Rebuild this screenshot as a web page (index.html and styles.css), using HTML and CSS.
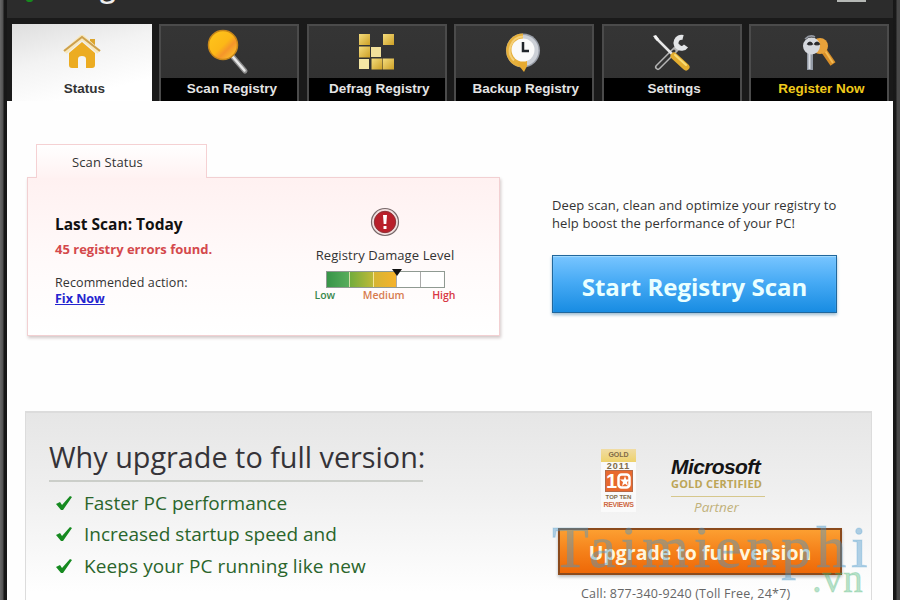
FILE: index.html
```html
<!DOCTYPE html>
<html lang="en">
<head>
  <meta charset="UTF-8">
  <title>RegClean Pro</title>
  <link rel="stylesheet" href="styles.css">
</head>
<body>
<div class="window">
  <div class="titlebar">
    <span class="app-dot"></span>
    <span class="app-name">RegClean Pro</span>
    <span class="lang-box"></span>
  </div>

  <div class="tabs">
    <div class="tab active">
      <svg class="tab-icon" width="38" height="34" viewBox="0 0 38 34">
        <path d="M27 4h5v10l-5-4z" fill="#dca52c"/>
        <path d="M2 17L19 2l17 15" fill="none" stroke="#f8e8bc" stroke-width="5"/>
        <path d="M1 16L19 2l18 14" fill="none" stroke="#cda04c" stroke-width="2"/>
        <path d="M6 18L19 7l13 11v12q0 3-3 3h-6v-9q0-3-4-3t-4 3v9H9q-3 0-3-3z" fill="#ecac22"/>
      </svg>
      <span class="tab-label">Status</span>
    </div>
    <div class="tab">
      <svg class="tab-icon" width="44" height="48" viewBox="0 0 44 48">
        <defs>
          <linearGradient id="lens" x2="1" y2="1"><stop offset="0" stop-color="#ffc61c"/><stop offset=".5" stop-color="#fcb817"/><stop offset=".65" stop-color="#f5952a"/><stop offset="1" stop-color="#ffd42b"/></linearGradient>
        </defs>
        <path d="M27 29l12 14" stroke="#8d8d8d" stroke-width="5" stroke-linecap="round"/>
        <path d="M27 29l11.500 13.500" stroke="#e8e8e8" stroke-width="2.500" stroke-linecap="round"/>
        <circle cx="17" cy="17" r="14.500" fill="url(#lens)" stroke="#c8871a" stroke-width="1.500"/>
      </svg>
      <span class="tab-label">Scan Registry</span>
    </div>
    <div class="tab">
      <svg class="tab-icon" width="36" height="36" viewBox="0 0 36 36">
        <defs>
          <linearGradient id="gold" x2="1" y2="1"><stop offset="0" stop-color="#f4dc7d"/><stop offset="1" stop-color="#cda026"/></linearGradient>
        </defs>
        <g fill="url(#gold)">
          <rect x="0" y="0" width="11" height="11"/>
          <rect x="24" y="0" width="11" height="11"/>
          <rect x="0" y="12.500" width="11" height="11"/>
          <rect x="12.500" y="24.500" width="11" height="11"/>
          <rect x="24" y="24.500" width="11" height="11"/>
        </g>
        <rect x="12" y="13" width="10" height="10" fill="#f1e09b"/>
        <rect x="0" y="25" width="10" height="10" fill="#f4e6a4"/>
      </svg>
      <span class="tab-label">Defrag Registry</span>
    </div>
    <div class="tab">
      <svg class="tab-icon" width="38" height="42" viewBox="0 0 38 42">
        <circle cx="19" cy="18.500" r="17" fill="#9a9fa9"/>
        <circle cx="19" cy="18.500" r="15.500" fill="#ccd0d7"/>
        <path d="M19 1.500a17 17 0 0 0-4 33.500l4-5z" fill="#e6b03c"/>
        <path d="M19 4.500a14 14 0 0 0-9 24" fill="none" stroke="#f4cf77" stroke-width="2"/>
        <path d="M13 31l10-4v7l-3 6-4-5z" fill="#e6aa31"/>
        <circle cx="19" cy="18" r="11.500" fill="#fafafa"/>
        <path d="M19 10v9h6" fill="none" stroke="#20242a" stroke-width="2.500"/>
      </svg>
      <span class="tab-label">Backup Registry</span>
    </div>
    <div class="tab">
      <svg class="tab-icon" width="38" height="38" viewBox="0 0 38 38">
        <path d="M26 13L6 33" stroke="#b4b4b4" stroke-width="6" stroke-linecap="round"/>
        <path d="M22 17L6 33" stroke="#343434" stroke-width="3" stroke-linecap="round"/>
        <path d="M31 3.500a5.500 5.500 0 1 0 3 8.500" fill="none" stroke="#e3e5e7" stroke-width="5"/>
        <path d="M3 3l17 17" stroke="#e6e6e6" stroke-width="2.500"/>
        <path d="M1 2l3-1 3 4-2 2z" fill="#f4f4f4"/>
        <path d="M22 22l12 11" stroke="#e3ad2f" stroke-width="7" stroke-linecap="round"/>
        <path d="M23 21l11 10" stroke="#f8dc76" stroke-width="2" stroke-linecap="round"/>
      </svg>
      <span class="tab-label">Settings</span>
    </div>
    <div class="tab">
      <svg class="tab-icon keys" width="34" height="38" viewBox="0 0 34 38">
        <path d="M20 13l11 16" stroke="#d98f28" stroke-width="6"/>
        <path d="M22 14l9 14" stroke="#f3bb54" stroke-width="2"/>
        <circle cx="18" cy="11" r="8" fill="#e8a23a"/>
        <path d="M8 17v18" stroke="#939aa5" stroke-width="6"/>
        <path d="M7.500 17v17" stroke="#d8dce2" stroke-width="2"/>
        <circle cx="9.500" cy="11" r="8.500" fill="#d5d8dd"/>
        <path d="M6 10q2-4 4 0M13 10q2-4 4 0" fill="none" stroke="#29292b" stroke-width="3"/>
        <path d="M3 4q5-5 10-2" fill="none" stroke="#9297a0" stroke-width="1.500"/>
      </svg>
      <span class="tab-label gold">Register Now</span>
    </div>
  </div>

  <div class="content">
    <div class="top-row">
      <div class="scan-box">
        <div class="scan-tab">Scan Status</div>
        <div class="scan-card">
          <div class="scan-info">
            <div class="last-scan">Last Scan: Today</div>
            <div class="errors">45 registry errors found.</div>
            <div class="recommend">Recommended action:</div>
            <a class="fix" href="#">Fix Now</a>
          </div>
          <div class="damage">
            <svg class="alert" width="30" height="30" viewBox="0 0 30 30">
              <circle cx="15" cy="15" r="13.500" fill="#f1dfdf" stroke="#77696a" stroke-width="1.200"/>
              <circle cx="15" cy="15" r="10.700" fill="#b91f2a" stroke="#8e3036"/>
              <path d="M13 8h4l-.7 9h-2.600zM13.500 19h3v3h-3z" fill="#fff"/>
            </svg>
            <div class="damage-title">Registry Damage Level</div>
            <div class="gauge">
              <span class="seg s1"></span><span class="seg s2"></span><span class="seg s3"></span><span class="seg"></span><span class="seg"></span>
              <span class="pointer"></span>
            </div>
            <div class="levels"><span class="low">Low</span><span class="medium">Medium</span><span class="high">High</span></div>
          </div>
        </div>
      </div>

      <div class="start">
        <p class="intro">Deep scan, clean and optimize your registry to<br>help boost the performance of your PC!</p>
        <div class="btn btn-blue">Start Registry Scan</div>
      </div>
    </div>

    <div class="upgrade">
      <div class="why">
        <h2>Why upgrade to full version:</h2>
        <ul>
          <li><svg width="16" height="16" viewBox="0 0 16 16"><path d="M0 9l4-2 2 3 8-9 2 1-9 13H5z" fill="#168a20"/></svg>Faster PC performance</li>
          <li><svg width="16" height="16" viewBox="0 0 16 16"><path d="M0 9l4-2 2 3 8-9 2 1-9 13H5z" fill="#168a20"/></svg>Increased startup speed and</li>
          <li class="last"><svg width="16" height="16" viewBox="0 0 16 16"><path d="M0 9l4-2 2 3 8-9 2 1-9 13H5z" fill="#168a20"/></svg>Keeps your PC running like new</li>
        </ul>
      </div>
      <div class="offer">
        <div class="badges">
          <div class="award">
            <span class="award-gold">GOLD</span>
            <span class="award-year">2011</span>
            <span class="award-ten">1<svg width="14" height="18" viewBox="0 0 14 18"><rect x="1.500" y="2.500" width="11" height="13" rx="3" fill="none" stroke="#fff" stroke-width="2.500"/><path d="M8 4l1.200 3.500H13L10 10l1 4-3-2.300L5 14l1-4-3-2.500h3.800z" fill="#fff"/></svg></span>
            <span class="award-top">TOP TEN</span>
            <span class="award-rev">REVIEWS</span>
          </div>
          <div class="ms">
            <span class="ms-name">Microsoft</span>
            <span class="ms-gold">GOLD CERTIFIED</span>
            <span class="ms-partner">Partner</span>
          </div>
        </div>
        <div class="btn btn-orange">Upgrade to full version</div>
        <div class="call">Call: 877-340-9240 (Toll Free, 24*7)</div>
      </div>
    </div>
  </div>
  <div class="watermark">Taimienphi</div>
  <div class="watermark-vn">.vn</div>
</div>
</body>
</html>
```
FILE: styles.css
```css
* {
  box-sizing: border-box;
}
body {
  margin: 0;
  width: 900px;
  height: 600px;
  overflow: hidden;
  font-family: "Open Sans", "Noto Sans", sans-serif;
  color: #333;
}
.window {
  position: relative;
  height: 600px;
  padding: 0 7px;
  overflow: hidden;
  background: linear-gradient(90deg, #686868 0, #505050 3px, #171717 4px, #171717 7px, #171717 893px, #191919 896px, #484848 897px);
}
/* title bar, mostly scrolled out of view */
.titlebar {
  position: relative;
  height: 18px;
  background: #2c2c2c;
  overflow: hidden;
}
.app-dot {
  position: absolute;
  left: 19px;
  top: -3px;
  width: 7px;
  height: 5px;
  border-radius: 50%;
  background: #168a1d;
}
.app-name {
  position: absolute;
  left: 55px;
  top: -30px;
  font-size: 28px;
  line-height: 32px;
  font-weight: 600;
  letter-spacing: 2px;
  color: #eee;
  white-space: nowrap;
}
.lang-box {
  position: absolute;
  left: 830px;
  top: 0;
  width: 29px;
  height: 2px;
  background: #b5b8b5;
}
.tabs {
  display: flex;
  justify-content: space-between;
  height: 83px;
  padding: 6px 4px 0 5px;
  background: #1a1a1a;
}
.tab {
  display: flex;
  flex-direction: column;
  align-items: center;
  justify-content: flex-end;
  width: 140px;
  height: 77px;
  border: 2px solid #4b4b4b;
  border-bottom: 0;
  background: linear-gradient(#353535, #303030);
}
.tab-icon {
  display: block;
  margin-bottom: 8px;
}
.tab:nth-child(2) .tab-icon {
  margin-bottom: 2px;
  margin-right: 2px;
}
.tab:nth-child(4) .tab-icon {
  margin-bottom: 4px;
  margin-right: 2px;
}
.tab:nth-child(5) .tab-icon {
  margin-bottom: 6px;
  margin-right: 2px;
}
.tab .keys {
  margin-bottom: 5px;
  margin-left: 1px;
}
.tab-label {
  width: 100%;
  height: 23px;
  padding-left: 5px;
  background: #000;
  color: #e4e4e4;
  font: bold 13.5px/21px "Liberation Sans", Arial, sans-serif;
  letter-spacing: 0;
  text-align: center;
  white-space: nowrap;
}
.tab:nth-child(4) .tab-label {
  padding-left: 3px;
}
.gold {
  color: #efc91b;
}
.active {
  border: 0;
  background: linear-gradient(165deg, #dedede, #f3f3f3 40%, #fff 80%);
}
.active .tab-label {
  background: none;
  color: #333;
}
.active .tab-icon {
  margin-bottom: 9px;
}
.content {
  height: 499px;
  padding: 43px 21px 0 18px;
  background: #fefefe;
}
.top-row {
  display: flex;
  justify-content: space-between;
  height: 267px;
  padding: 0 35px 0 2px;
}
.scan-box {
  width: 473px;
}
.scan-tab {
  width: 171px;
  height: 34px;
  margin: 0 0 -1px 9px;
  padding-left: 35px;
  border: 1px solid #f5d1d3;
  border-bottom: 0;
  background: linear-gradient(#fff, #fff2f2);
  font-size: 13px;
  line-height: 35px;
  letter-spacing: .1px;
  position: relative;
  z-index: 1;
}
.scan-card {
  display: flex;
  height: 159px;
  border: 1px solid #f2d0d2;
  background: linear-gradient(#fff1f1, #fffafa 55%, #fff);
  box-shadow: 1px 2px 3px #d2c8c8;
}
.scan-info {
  width: 257px;
  padding: 36px 0 0 27px;
  white-space: nowrap;
}
.last-scan {
  color: #111;
  font-size: 15.5px;
  font-weight: 700;
  line-height: 21px;
}
.errors {
  margin-top: 5px;
  color: #d4494c;
  font-size: 13px;
  font-weight: 700;
  line-height: 18px;
}
.recommend {
  margin-top: 17px;
  font-size: 12.5px;
  line-height: 16px;
  letter-spacing: .1px;
}
.fix {
  display: block;
  color: #2525cf;
  font-size: 12.5px;
  font-weight: 700;
  line-height: 15px;
}
.damage {
  display: flex;
  flex-direction: column;
  align-items: center;
  width: 200px;
  padding-top: 29px;
}
.alert {
  display: block;
}
.damage-title {
  margin-top: 8px;
  font-size: 13px;
  line-height: 20px;
  letter-spacing: .1px;
  white-space: nowrap;
}
.gauge {
  position: relative;
  display: flex;
  width: 119px;
  height: 17px;
  margin-top: 6px;
  border: 1px solid #8f9a92;
}
.seg {
  flex: 1;
  border-right: 1px solid #aaa;
  background: #fff;
}
.seg:nth-child(5) {
  border-right: 0;
}
.s1 {
  background: linear-gradient(90deg, #379548, #58ad5c);
  border-color: #d5e1a9;
}
.s2 {
  background: linear-gradient(90deg, #72ac3c, #bdb938);
  border-color: #f5e796;
}
.s3 {
  background: linear-gradient(90deg, #d6b532, #f5b22b);
}
.pointer {
  position: absolute;
  left: 65px;
  top: -3px;
  border: 5px solid transparent;
  border-top: 7px solid #111;
  border-bottom: 0;
}
.levels {
  display: flex;
  justify-content: space-between;
  width: 141px;
  font-size: 10.5px;
  font-weight: 600;
  line-height: 15px;
}
.low {
  color: #39894d;
}
.medium {
  color: #d77c50;
}
.high {
  color: #d83743;
}
.start {
  width: 285px;
  padding-top: 53px;
}
.intro {
  margin: 0 0 23px;
  font-size: 13px;
  line-height: 17.5px;
  letter-spacing: .1px;
  white-space: nowrap;
}
.btn {
  display: flex;
  align-items: center;
  justify-content: center;
  color: #fff;
  font-weight: 700;
  white-space: nowrap;
}
.btn-blue {
  height: 58px;
  padding-top: 4px;
  border: 1px solid #20679c;
  background: linear-gradient(#78c5ff, #48abf5 45%, #188ce2);
  box-shadow: 0 2px 3px #9ebdd1, inset 0 1px 1px #a5dcff;
  color: #eaffff;
  font-size: 24px;
}
.upgrade {
  display: flex;
  width: 847px;
  height: 190px;
  border: 1px solid #dcdcdc;
  border-top-width: 2px;
  border-bottom: 0;
  background: linear-gradient(#e6e6e6, #f0f0f0 45%, #fefefe 95%);
}
.why {
  width: 532px;
  padding: 27px 0 0 23px;
}
h2 {
  width: 374px;
  height: 42px;
  margin: 0;
  border-bottom: 2px solid #cbcec9;
  color: #353338;
  font-size: 28.8px;
  font-weight: 400;
  line-height: 33px;
  white-space: nowrap;
}
ul {
  margin: 5px 0 0;
  padding: 0;
  list-style: none;
}
li {
  display: flex;
  align-items: center;
  height: 31.5px;
  padding-left: 7px;
  gap: 12px;
  color: #2a652b;
  font-size: 19px;
  white-space: nowrap;
}
.last {
  letter-spacing: .1px;
}
.offer {
  width: 284px;
}
.badges {
  display: flex;
  height: 115px;
  padding: 36px 0 0 43px;
}
.award {
  display: flex;
  flex-direction: column;
  align-items: center;
  width: 35px;
  height: 63px;
  background: #fafafa;
  color: #806b48;
  font: bold 7px/8px "Liberation Sans", sans-serif;
}
.award-gold {
  width: 35px;
  height: 13px;
  padding-top: 2px;
  background: linear-gradient(#f0dca4, #eed26c);
  text-align: center;
}
.award-year {
  font-size: 9px;
  letter-spacing: 1px;
}
.award-ten {
  display: flex;
  align-items: center;
  justify-content: center;
  width: 28px;
  height: 22px;
  border: 1px solid #b46a48;
  background: #e8692f;
  color: #fff;
  font-size: 20px;
  line-height: 20px;
}
.award-top {
  margin-top: 2px;
  font-size: 6px;
  line-height: 7px;
}
.award-rev {
  color: #cf6a44;
  font-size: 7px;
  line-height: 7px;
  letter-spacing: -.3px;
}
.ms {
  display: flex;
  flex-direction: column;
  width: 94px;
  margin: 7px 0 0 35px;
  white-space: nowrap;
}
.ms-name {
  color: #151515;
  font: italic bold 21px/22px "Liberation Sans", Arial, sans-serif;
  letter-spacing: -.6px;
}
.ms-gold {
  height: 19px;
  border-bottom: 1px solid #d6c78c;
  color: #bca557;
  font-size: 11px;
  font-weight: 700;
  line-height: 11px;
  letter-spacing: .2px;
}
.ms-partner {
  padding-left: 23px;
  color: #c1b17a;
  font-size: 13.5px;
  font-style: italic;
  line-height: 20px;
}
.btn-orange {
  height: 47px;
  padding-top: 2px;
  border: 2px solid #8b4a1c;
  background: linear-gradient(#fc9f31, #f5811a 50%, #ee6807);
  box-shadow: 0 2px 3px #bbb;
  color: #fff5dc;
  font-size: 19.5px;
}
.call {
  margin-top: 9px;
  padding-left: 23px;
  color: #666;
  font-size: 12.5px;
  line-height: 20px;
  letter-spacing: .2px;
  white-space: nowrap;
}
/* site mark lies over the offer */
.watermark, .watermark-vn {
  position: absolute;
  left: 552px;
  top: 514px;
  color: rgba(72, 151, 202, .42);
  font: 60px/67px "Liberation Serif", "Times New Roman", serif;
  -webkit-text-stroke: 1px rgba(72, 151, 202, .25);
  letter-spacing: 4.8px;
  white-space: nowrap;
}
.watermark-vn {
  left: 812px;
  top: 560px;
  color: rgba(70, 180, 115, .4);
  font-size: 39px;
  line-height: 38px;
  letter-spacing: 1px;
  -webkit-text-stroke-color: rgba(70, 180, 115, .25);
}
```
